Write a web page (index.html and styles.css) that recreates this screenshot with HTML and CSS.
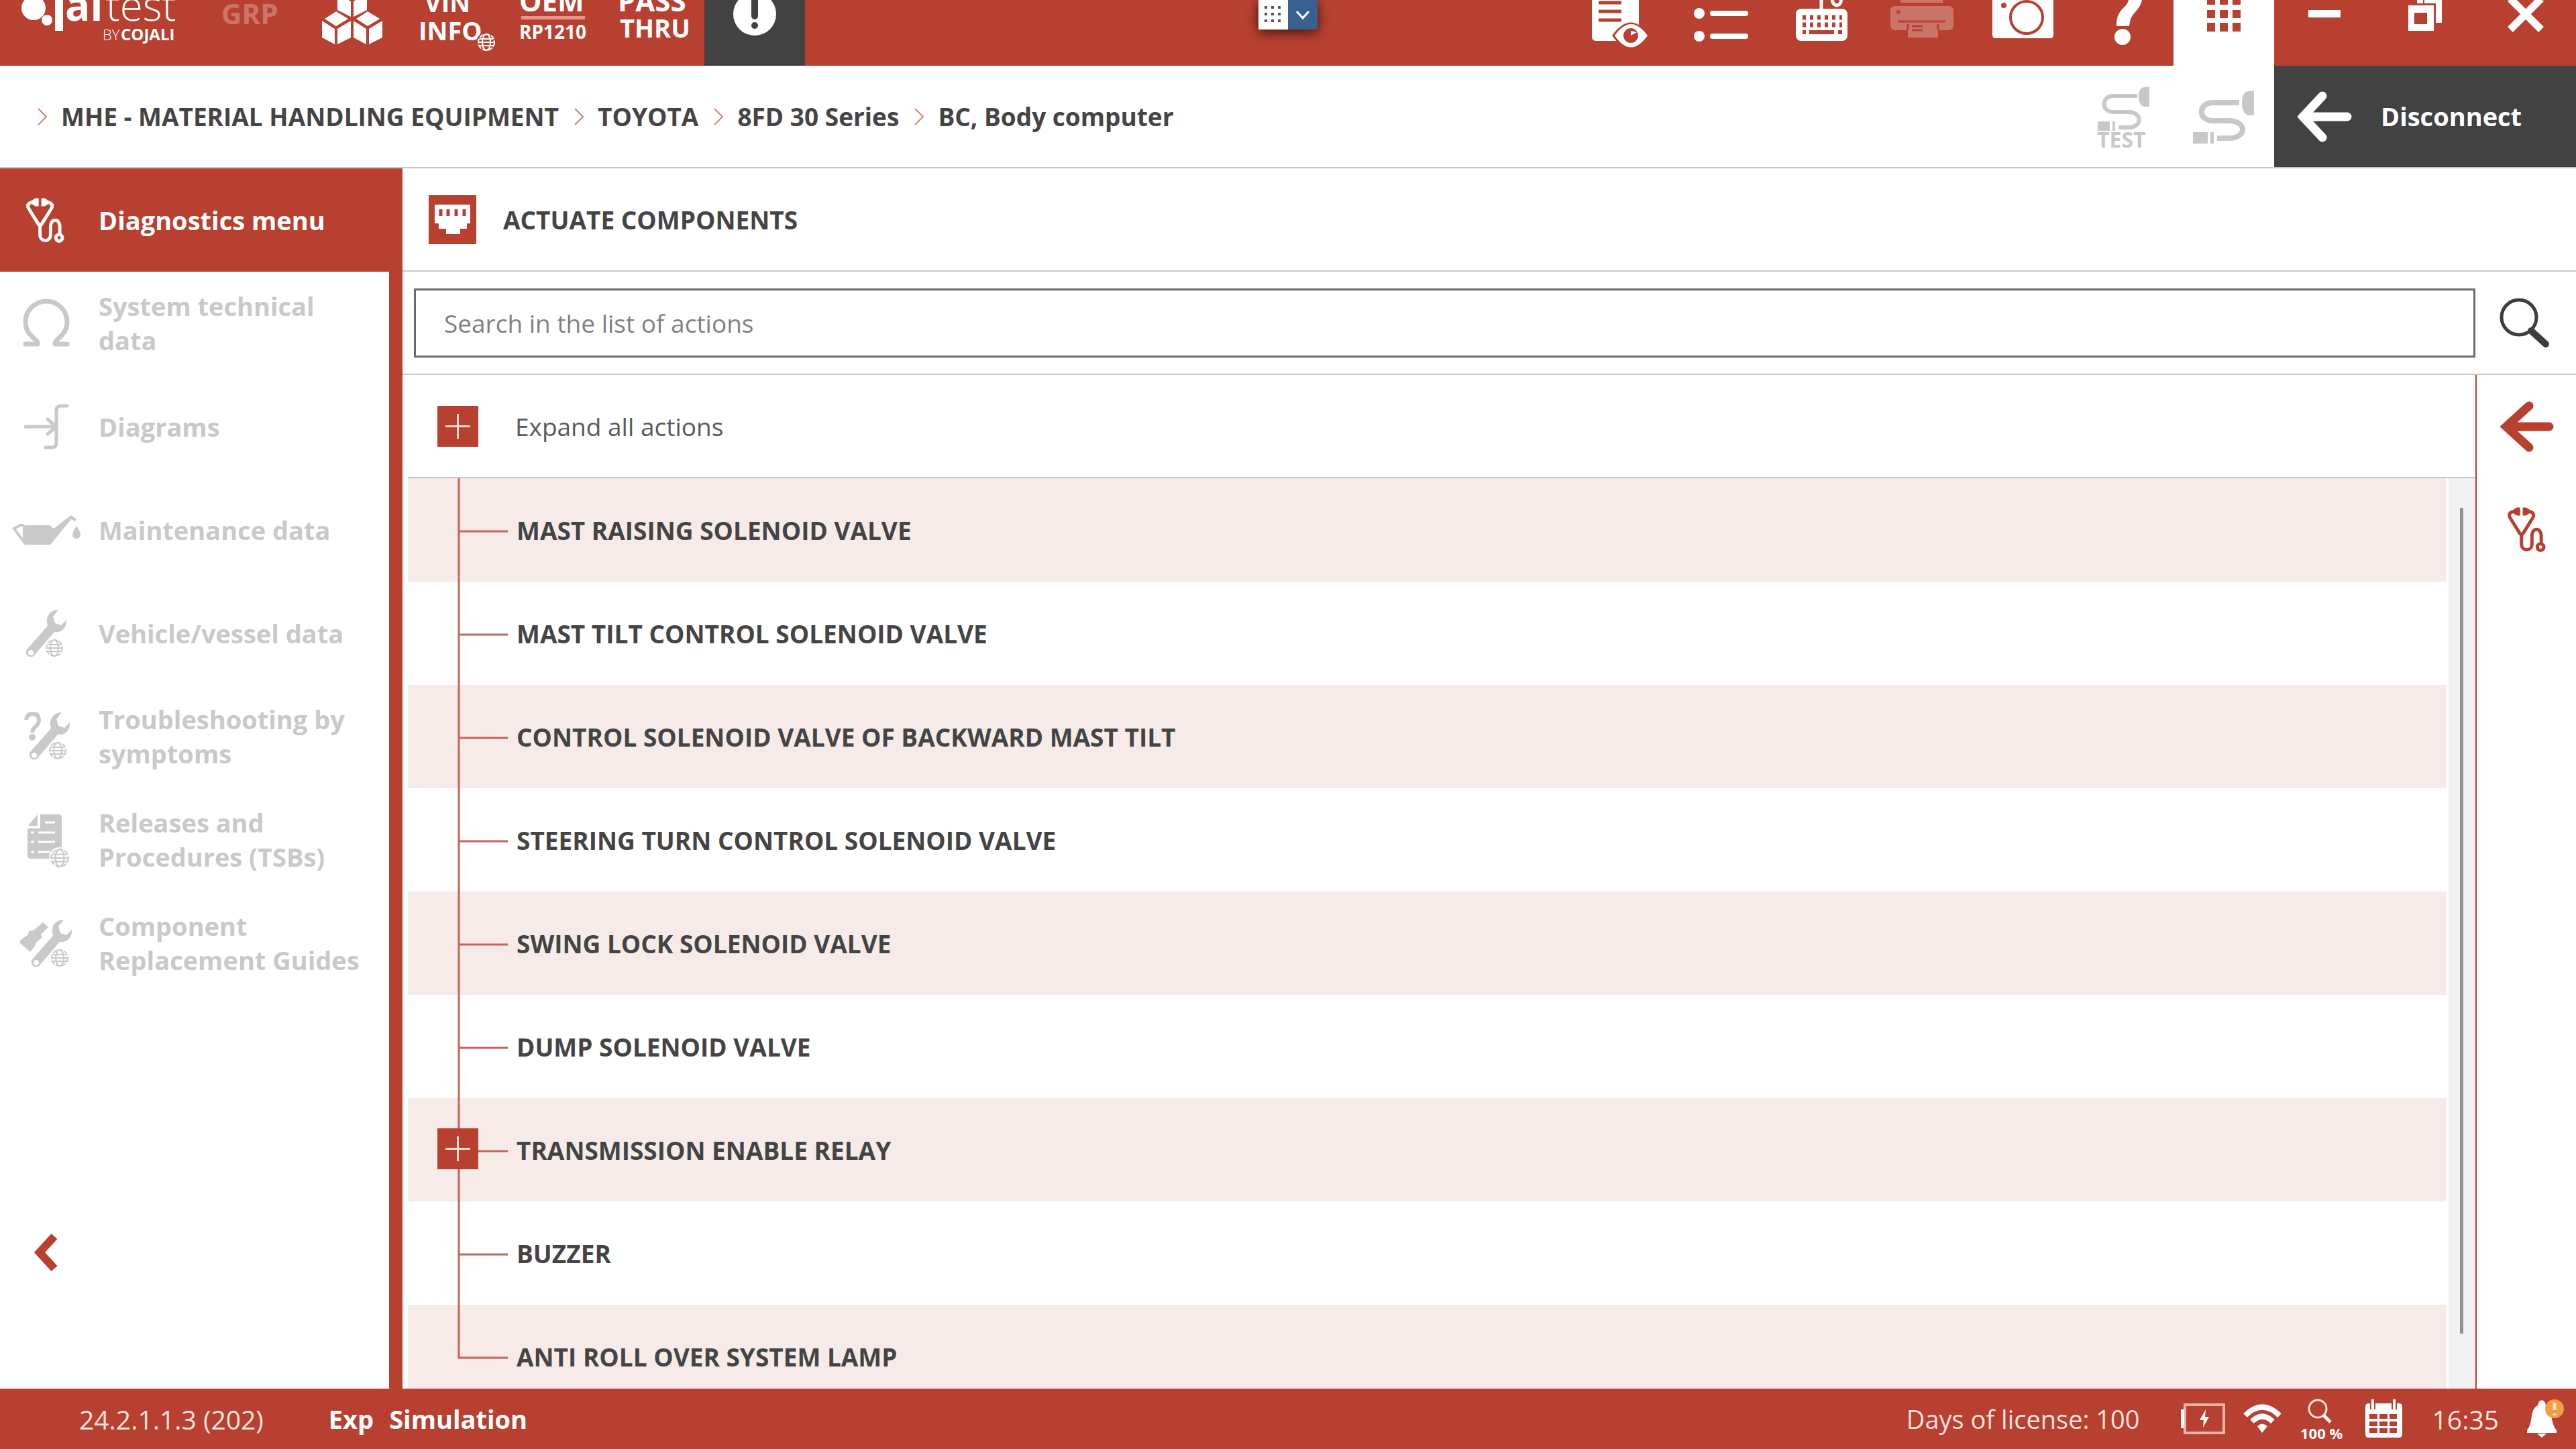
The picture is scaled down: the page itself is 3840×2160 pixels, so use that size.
FILE: index.html
```html
<!DOCTYPE html>
<html lang="en">
<head>
<meta charset="utf-8">
<title>Jaltest - Actuate components</title>
<link rel="stylesheet" href="styles.css">
</head>
<body>
<svg class="defs" aria-hidden="true">
  <symbol id="steth" viewBox="0 0 58 68">
    <g fill="none" stroke="currentColor" stroke-width="5" stroke-linejoin="round">
      <path d="M16 6H9C3 7 1 11 4 16L19 40H23L38 16C41 11 39 7 33 6H26"/>
      <path d="M21 40V55C21 67 37 67 37 55V43C37 30 51 30 51 43V55"/>
      <circle cx="50" cy="60" r="5"/>
    </g>
    <path fill="currentColor" d="M9 3L14 0H19V12H14L9 9ZM33 3L28 0H23V12H28L33 9Z"/>
  </symbol>
  <symbol id="globe" viewBox="0 0 28 28">
    <g fill="none" stroke="currentColor" stroke-width="2">
      <circle cx="14" cy="14" r="12" stroke-dasharray="7 2"/>
      <ellipse cx="14" cy="14" rx="6" ry="12"/>
      <path d="M4 9H24M2 14H26M4 19H24"/>
    </g>
  </symbol>
  <symbol id="wrench" viewBox="0 0 62 72">
    <path fill="currentColor" fill-rule="evenodd" d="M49 1C38 1 31 9 32 19L33 25L2 60C-2 67 5 74 12 70L43 34C54 36 62 27 61 16L53 24L44 21L41 11ZM8 61a4 4 0 1 0 .1 0Z"/>
  </symbol>
  <symbol id="plus" viewBox="0 0 61 61">
    <path d="M12 30.500H49M30.500 12V49" stroke="#f7d9d4" stroke-width="3"/>
  </symbol>
  <symbol id="branch" viewBox="0 0 150 154">
    <path d="M76 0V154M76 79H149" stroke="#c4655a" stroke-width="3" fill="none"/>
  </symbol>
</svg>

<div class="app">
  <header class="topbar">
    <a class="logo" href="#" aria-label="Jaltest by Cojali">
      <svg width="300" height="98" viewBox="0 0 300 98">
        <circle cx="50" cy="12" r="18"/><circle cx="70" cy="30" r="8"/>
        <path d="M82 0H94V46H82Z"/>
        <text class="logo-bold" x="97" y="31">al</text>
        <text class="logo-light" x="158" y="31">test</text>
        <text class="logo-by" x="153" y="60">BY</text>
        <text class="logo-cojali" x="180" y="60">COJALI</text>
      </svg>
    </a>
    <button class="tool faded" disabled><svg width="150" height="98" viewBox="300 0 150 98"><text class="t-grp" x="330" y="36">GRP</text></svg></button>
    <button class="tool" aria-label="Modules"><svg width="150" height="98" viewBox="450 0 150 98">
      <path d="M501 17L519 28L501 39L484 28ZM480 31L499 43V66L480 56ZM503 43L523 31V56L503 66ZM548 17L566 28L548 39L531 28ZM527 31L546 43V66L527 56ZM550 43L570 31V56L550 66ZM503-10L523 2V25L503 15ZM527 2L547-10V15L527 25Z"/>
    </svg></button>
    <button class="tool"><svg width="150" height="98" viewBox="600 0 150 98">
      <text class="t-tool" x="633" y="18">VIN</text><text class="t-tool" x="624" y="60">INFO</text>
      <circle cx="725" cy="63" r="15" fill="#b84030"/><use href="#globe" x="711" y="49" width="28" height="28"/>
    </svg></button>
    <button class="tool"><svg width="150" height="98" viewBox="750 0 150 98">
      <text class="t-big" x="774" y="17">OEM</text><path fill="#e09a8f" d="M777 24H872V29H777Z"/><text class="t-small" x="774" y="58">RP1210</text>
    </svg></button>
    <button class="tool"><svg width="150" height="98" viewBox="900 0 150 98">
      <text class="t-big" x="921" y="17">PASS</text><text class="t-tool" x="924" y="56">THRU</text>
    </svg></button>
    <button class="tool dark" aria-label="Alerts"><svg width="150" height="98" viewBox="1050 0 150 98">
      <circle cx="1125" cy="21" r="32"/><path d="M1125 0V24" stroke="#424242" stroke-width="10" stroke-linecap="round"/><circle cx="1125" cy="38" r="5" fill="#424242"/>
    </svg></button>
    <span class="spacer"></span>
    <button class="tool" aria-label="Reports"><svg width="150" height="98" viewBox="2340 0 150 98">
      <path d="M2373 0H2443V61H2379Q2373 61 2373 54Z"/>
      <path d="M2383 4H2417M2383 17H2417M2383 30H2417" stroke="#b84030" stroke-width="5"/>
      <path d="M2403 53Q2431 14 2459 53Q2431 92 2403 53Z" fill="#b84030"/>
      <path d="M2407 53Q2431 19 2456 53Q2431 88 2407 53Z"/>
      <circle cx="2431" cy="53" r="11" fill="#b84030"/><path d="M2431 53V46L2440 48Z"/>
    </svg></button>
    <button class="tool" aria-label="List"><svg width="150" height="98" viewBox="2490 0 150 98">
      <circle cx="2533" cy="20" r="8"/><circle cx="2533" cy="54" r="8"/>
      <path d="M2553 20H2602M2553 54H2602" stroke="#fff" stroke-width="8" stroke-linecap="round"/>
    </svg></button>
    <button class="tool" aria-label="Keyboard"><svg width="150" height="98" viewBox="2640 0 150 98">
      <rect x="2677" y="13" width="77" height="48" rx="8"/>
      <path d="M2715 14V0M2731 0Q2733 8 2738 8T2745 0" fill="none" stroke="#fff" stroke-width="5"/>
      <path d="M2687 26H2746M2687 37H2746" stroke="#b84030" stroke-width="7" stroke-dasharray="5 6"/>
      <path d="M2687 48H2692M2697 48H2734M2740 48H2746" stroke="#b84030" stroke-width="6"/>
    </svg></button>
    <button class="tool faded" aria-label="Print" disabled><svg width="150" height="98" viewBox="2790 0 150 98">
      <path d="M2833 0H2896V4H2833ZM2826 9H2904Q2912 9 2912 16V38Q2912 45 2904 45H2889V56H2844V45H2826Q2818 45 2818 38V16Q2818 9 2826 9Z"/>
      <path d="M2829 32H2900M2844 36V45M2889 36V45M2850 39H2866M2850 45H2866" stroke="#b84030" stroke-width="3"/><circle cx="2830" cy="18" r="3" fill="#b84030"/>
    </svg></button>
    <button class="tool" aria-label="Screenshot"><svg width="150" height="98" viewBox="2940 0 150 98">
      <path d="M2970 0H3061V52Q3061 57 3056 57H2975Q2970 57 2970 52Z"/>
      <circle cx="3021" cy="26" r="24" fill="none" stroke="#b84030" stroke-width="4"/><circle cx="2987" cy="8" r="4" fill="#b84030"/>
    </svg></button>
    <button class="tool" aria-label="Help"><svg width="150" height="98" viewBox="3090 0 150 98">
      <path d="M3173 0H3193Q3191 10 3182 19Q3175 26 3174 39H3155Q3154 22 3165 12Q3172 6 3173 0Z"/><circle cx="3164" cy="55" r="12"/>
    </svg></button>
    <button class="tool white" aria-label="Applications"><svg width="150" height="98" viewBox="3240 0 150 98">
      <path d="M3290 0h12v7h-12zM3309 0h12v7h-12zM3328 0h12v7h-12zM3290 15h12v12h-12zM3309 15h12v12h-12zM3328 15h12v12h-12zM3290 34h12v13h-12zM3309 34h12v13h-12zM3328 34h12v13h-12z"/>
    </svg></button>
    <button class="tool" aria-label="Minimize"><svg width="150" height="98" viewBox="3390 0 150 98"><path d="M3441 15H3489V26H3441Z"/></svg></button>
    <button class="tool" aria-label="Restore"><svg width="150" height="98" viewBox="3540 0 150 98">
      <path fill-rule="evenodd" d="M3590 8H3628V46H3590ZM3599 19V36H3618V19Z"/><path d="M3603 0H3612V5H3603ZM3614 0H3640V34H3631V5H3614Z"/>
    </svg></button>
    <button class="tool" aria-label="Close"><svg width="150" height="98" viewBox="3690 0 150 98"><path d="M3742-2L3788 44M3788-2L3742 44" stroke="#fff" stroke-width="11"/></svg></button>

    <div class="dock">
      <button class="dock-grid" aria-label="Toolbar"><svg width="44" height="44" viewBox="0 0 44 44"><path d="M9 9h4v4h-4zM19 9h4v4h-4zM29 9h4v4h-4zM9 19h4v4h-4zM19 19h4v4h-4zM29 19h4v4h-4zM9 29h4v4h-4zM19 29h4v4h-4zM29 29h4v4h-4z" fill="#555"/></svg></button>
      <button class="dock-more" aria-label="More"><svg width="44" height="44" viewBox="0 0 44 44"><path d="M13 17L22 27L31 17" fill="none" stroke="#fff" stroke-width="3"/></svg></button>
    </div>
  </header>

  <div class="pathbar">
    <nav class="crumbs" aria-label="Breadcrumb">
      <svg class="chev" viewBox="0 0 16 28"><path d="M2 2L14 14L2 26"/></svg><a href="#">MHE - MATERIAL HANDLING EQUIPMENT</a>
      <svg class="chev" viewBox="0 0 16 28"><path d="M2 2L14 14L2 26"/></svg><a href="#">TOYOTA</a>
      <svg class="chev" viewBox="0 0 16 28"><path d="M2 2L14 14L2 26"/></svg><a href="#">8FD 30 Series</a>
      <svg class="chev" viewBox="0 0 16 28"><path d="M2 2L14 14L2 26"/></svg><a href="#">BC, Body computer</a>
    </nav>
    <button class="cable" aria-label="Cable test" disabled><svg width="150" height="151" viewBox="3090 98 150 151">
      <path d="M3186 143H3150C3132 143 3132 167 3150 167H3173C3194 167 3194 190 3173 190H3158" fill="none" stroke="#c8c8c8" stroke-width="6"/>
      <path d="M3204 129V159H3196Q3188 157 3188 144T3196 130ZM3127 181H3145V195H3127ZM3149 181H3153V195H3149Z"/>
      <text class="t-test" x="3126" y="220">TEST</text>
    </svg></button>
    <button class="cable" aria-label="Cable" disabled><svg width="150" height="151" viewBox="3240 98 150 151">
      <path d="M3338 153H3299C3276 153 3276 180 3299 180H3322C3350 180 3350 206 3322 206H3305" fill="none" stroke="#c8c8c8" stroke-width="8"/>
      <path d="M3360 135V172H3352Q3342 169 3342 153T3352 136ZM3269 197H3291V214H3269ZM3295 197H3300V214H3295Z"/>
    </svg></button>
    <button class="disconnect"><svg class="arrow" viewBox="0 0 81 76"><path d="M37 7L8 38L37 69M10 38H74"/></svg>Disconnect</button>
  </div>

  <div class="main">
    <nav class="sidebar" aria-label="Sections">
      <a class="item active" href="#"><svg viewBox="0 251 140 154"><use href="#steth" x="39" y="295" width="57" height="68"/></svg><span>Diagnostics menu</span></a>
      <a class="item" href="#"><svg viewBox="0 405 140 154"><path d="M38 513H56C58 506 38 501 38 480A31 31 0 0 1 100 480C100 501 80 506 82 513H100" fill="none" stroke="currentColor" stroke-width="7" stroke-linecap="round" stroke-linejoin="round"/></svg><span>System technical data</span></a>
      <a class="item" href="#"><svg viewBox="0 559 140 154"><path d="M38 636H84M71 625L84 636L71 647M100 605H91Q84 605 84 612V660Q84 667 77 667H68" fill="none" stroke="currentColor" stroke-width="5" stroke-linecap="round"/></svg><span>Diagrams</span></a>
      <a class="item" href="#"><svg viewBox="0 713 140 154"><path fill="currentColor" d="M37 783H74L80 788L106 768L114 774L112 777L106 774L75 812H37L34 809V786ZM114 784Q120 793 120 797A6 6 0 0 1 108 797Q108 793 114 784Z"/><path d="M35 807L21 788L30 783H36" fill="none" stroke="currentColor" stroke-width="4"/></svg><span>Maintenance data</span></a>
      <a class="item" href="#"><svg viewBox="0 867 140 154"><use href="#wrench" x="38" y="908" width="62" height="72"/><circle cx="81" cy="966" r="14" fill="#fff"/><use href="#globe" x="67" y="952" width="28" height="28"/></svg><span>Vehicle/vessel data</span></a>
      <a class="item" href="#"><svg viewBox="0 1021 140 154"><path d="M39 1073Q40 1064 49 1064T58 1074C58 1082 48 1084 48 1092" fill="none" stroke="currentColor" stroke-width="6"/><circle cx="48" cy="1099" r="5" fill="currentColor"/><use href="#wrench" x="43" y="1061" width="62" height="72"/><circle cx="86" cy="1119" r="14" fill="#fff"/><use href="#globe" x="72" y="1105" width="28" height="28"/></svg><span>Troubleshooting by symptoms</span></a>
      <a class="item" href="#"><svg viewBox="0 1175 140 154"><path fill="currentColor" d="M60 1214H87Q92 1214 92 1219V1280H46Q41 1280 41 1275V1235H60ZM56 1214V1231H42Z"/><path d="M67 1226H82M57 1241H82M57 1255H82M57 1270H75M46 1241H51M46 1255H51M46 1270H51" stroke="#fff" stroke-width="3"/><circle cx="89" cy="1279" r="16" fill="#fff"/><use href="#globe" x="74" y="1264" width="30" height="30"/></svg><span>Releases and Procedures (TSBs)</span></a>
      <a class="item" href="#"><svg viewBox="0 1329 140 154"><path fill="currentColor" d="M64 1375L72 1382L61 1393L63 1397L53 1406V1409L45 1419L30 1406V1402L42 1393L43 1388L50 1387Z"/><use href="#wrench" x="46" y="1370" width="62" height="72"/><circle cx="89" cy="1428" r="14" fill="#fff"/><use href="#globe" x="75" y="1414" width="28" height="28"/></svg><span>Component Replacement Guides</span></a>
      <button class="collapse" aria-label="Collapse menu"><svg width="140" height="154" viewBox="0 0 140 154"><path d="M81 53L59 77L81 101" fill="none" stroke="#b84030" stroke-width="12"/></svg></button>
    </nav>

    <main class="content">
      <div class="title">
        <svg width="71" height="73" viewBox="0 0 71 73"><path fill="#b84030" d="M0 0H71V73H0Z"/><path fill="#fff" d="M9 14H62V42H57V50H47V58H26V50H15V42H9Z"/><path d="M18 21V31M29 21V31M41 21V31M53 21V31" stroke="#b84030" stroke-width="5"/></svg>
        <h1>ACTUATE COMPONENTS</h1>
      </div>
      <form class="search">
        <input type="text" aria-label="Search in the list of actions" placeholder="Search in the list of actions">
        <button type="button" aria-label="Search"><svg width="148" height="103" viewBox="3693 430 148 103"><circle cx="3756" cy="473" r="26" fill="none" stroke="#3d3d3d" stroke-width="5"/><path d="M3774 493L3796 513" stroke="#3d3d3d" stroke-width="10" stroke-linecap="round"/></svg></button>
      </form>
      <div class="body">
        <section class="panel">
          <button class="expand"><span class="box"><svg><use href="#plus"/></svg></span>Expand all actions</button>
          <div class="listwrap">
            <ul class="list">
              <li><svg><use href="#branch"/></svg>MAST RAISING SOLENOID VALVE</li>
              <li><svg><use href="#branch"/></svg>MAST TILT CONTROL SOLENOID VALVE</li>
              <li><svg><use href="#branch"/></svg>CONTROL SOLENOID VALVE OF BACKWARD MAST TILT</li>
              <li><svg><use href="#branch"/></svg>STEERING TURN CONTROL SOLENOID VALVE</li>
              <li><svg><use href="#branch"/></svg>SWING LOCK SOLENOID VALVE</li>
              <li><svg><use href="#branch"/></svg>DUMP SOLENOID VALVE</li>
              <li><svg><use href="#branch"/></svg><button class="box over" aria-label="Expand"><svg><use href="#plus"/></svg></button>TRANSMISSION ENABLE RELAY</li>
              <li><svg><use href="#branch"/></svg>BUZZER</li>
              <li><svg viewBox="0 0 150 154"><path d="M76 0V79H149" stroke="#c4655a" stroke-width="3" fill="none"/></svg>ANTI ROLL OVER SYSTEM LAMP</li>
            </ul>
            <div class="track"><div class="thumb"></div></div>
          </div>
        </section>
        <aside class="rail">
          <button aria-label="Back"><svg class="arrow" viewBox="0 0 81 76"><path d="M44 7L10 38L44 69M12 38H74"/></svg></button>
          <button aria-label="Diagnostics"><svg width="57" height="68"><use href="#steth"/></svg></button>
        </aside>
      </div>
    </main>
  </div>

  <footer class="status">
    <span class="num version">24.2.1.1.3 (202)</span>
    <b class="exp">Exp</b><b>Simulation</b>
    <span class="spacer"></span>
    <span>Days of license: 100</span>
    <svg width="436" height="90" viewBox="3191 2070 436 90" fill="#fff">
      <path d="M3258 2094H3316V2136H3258Z" fill="none" stroke="#efb5ab" stroke-width="4"/><path d="M3252 2101H3257V2129H3252ZM3289 2101L3280 2117H3286L3285 2128L3294 2112H3288Z"/>
      <g fill="none" stroke="#fff" stroke-width="8"><path d="M3348 2110Q3373 2085 3399 2110M3358 2119Q3373 2104 3389 2119"/></g><path d="M3373 2136L3366 2126Q3373 2119 3381 2126Z"/>
      <circle cx="3456" cy="2100" r="13" fill="none" stroke="#fbe3df" stroke-width="3"/><path d="M3465 2110L3475 2120" stroke="#fff" stroke-width="5"/>
      <text class="t-zoom" x="3430" y="2145">100 %</text>
      <path fill-rule="evenodd" d="M3532 2092H3577Q3582 2092 3582 2097V2138Q3582 2143 3577 2143H3532Q3527 2143 3527 2138V2097Q3527 2092 3532 2092ZM3533 2108V2115H3545V2108ZM3548 2108V2115H3560V2108ZM3563 2108V2115H3574V2108ZM3533 2119V2126H3545V2119ZM3548 2119V2126H3560V2119ZM3563 2119V2126H3574V2119ZM3533 2129V2136H3545V2129ZM3548 2129V2136H3560V2129ZM3563 2129V2136H3574V2129Z"/>
      <path d="M3538 2089V2101M3570 2089V2101" stroke="#b84030" stroke-width="8"/><path d="M3538 2086V2102M3570 2086V2102" stroke="#fff" stroke-width="4"/>
    </svg>
    <span class="num">16:35</span>
    <svg width="115" height="90" viewBox="3725 2070 115 90" fill="#fff">
      <path d="M3789 2087Q3794 2088 3795 2095C3806 2102 3801 2120 3811 2132V2136H3767V2132C3777 2120 3770 2102 3783 2095Q3784 2088 3789 2087ZM3782 2137H3796L3789 2143Z"/>
      <circle cx="3808" cy="2100" r="14" fill="#ef9f45"/><path d="M3808 2091V2102M3808 2107V2110" stroke="#fbdcb4" stroke-width="5"/>
    </svg>
  </footer>
</div>
</body>
</html>
```
FILE: styles.css
```css
* { box-sizing: border-box; }
body {
  margin: 0;
  font: 700 37px/51px "Open Sans", "Noto Sans", sans-serif;
  color: #444;
  background: #fff;
}
a { color: inherit; text-decoration: none; }
button {
  margin: 0;
  padding: 0;
  border: 0;
  background: none;
  font: inherit;
  color: inherit;
}
svg { display: block; flex: none; }
.defs { position: absolute; width: 0; height: 0; }
.spacer { flex: 1; }

.app { display: flex; flex-direction: column; height: 100vh; overflow: hidden; }

/* Top toolbar */
.topbar {
  position: relative;
  display: flex;
  flex: none;
  background: #b84030;
  color: #fff;
  fill: #fff;
}
.tool.dark { background: #424242; }
.tool.white { background: #fff; fill: #b84030; }
.tool.faded svg { opacity: 0.28; }
.logo-bold { font-size: 62px; font-weight: 700; }
.logo-light { font-size: 62px; font-weight: 300; }
.logo-by { font-size: 22px; font-weight: 300; }
.logo-cojali { font-size: 24px; font-weight: 700; }
.t-grp { font-size: 42px; font-weight: 700; }
.t-tool { font-size: 38px; font-weight: 700; }
.t-big { font-size: 42px; font-weight: 700; }
.t-small { font-size: 28px; font-weight: 700; }
.dock {
  position: absolute;
  top: 0;
  left: 50%;
  display: flex;
  transform: translateX(-50%);
  box-shadow: 0 4px 18px rgba(0, 0, 0, 0.7);
}
.dock-grid { background: #fff; }
.dock-more { background: #38618f; }

/* Breadcrumb bar */
.pathbar {
  display: flex;
  flex: none;
  height: 153px;
  border-bottom: 2px solid #c8c8c8;
}
.crumbs { display: flex; flex: 1; align-items: center; gap: 20px; padding-left: 55px; }
.crumbs a { margin-right: 2px; }
.chev { width: 16px; height: 28px; fill: none; stroke: #cf8177; stroke-width: 2; }
.cable { fill: #c8c8c8; }
.t-test { font-size: 32px; font-weight: 700; }
.disconnect {
  display: flex;
  align-items: center;
  width: 450px;
  gap: 43px;
  padding-left: 35px;
  background: #424242;
  color: #fff;
  font-size: 38px;
}
.arrow {
  width: 81px;
  height: 76px;
  fill: none;
  stroke: currentColor;
  stroke-width: 13px;
  stroke-linecap: round;
}

/* Sidebar */
.main { display: flex; flex: 1; min-height: 0; }
.sidebar {
  display: flex;
  flex: none;
  flex-direction: column;
  width: 600px;
  border-right: 20px solid #b84030;
  color: #c9c9c9;
  font-size: 38px;
}
.item { display: flex; flex: none; align-items: center; gap: 7px; height: 154px; }
.item svg { width: 140px; height: 154px; }
.item span { width: 400px; }
.item.active { background: #b84030; color: #fff; }
.collapse { margin-top: auto; margin-bottom: 126px; align-self: flex-start; }

/* Content */
.content { display: flex; flex: 1; flex-direction: column; min-width: 0; }
.title {
  display: flex;
  flex: none;
  align-items: center;
  gap: 40px;
  height: 154px;
  padding-left: 39px;
  border-bottom: 2px solid #c8c8c8;
}
h1 { margin: 0; font: inherit; }
.search {
  display: flex;
  flex: none;
  align-items: center;
  gap: 2px;
  height: 154px;
  padding-left: 17px;
  border-bottom: 2px solid #c8c8c8;
}
.search input {
  flex: 1;
  min-width: 0;
  height: 103px;
  padding: 0 42px;
  border: 3px solid #6a6a6a;
  font: 400 37px "Open Sans", "Noto Sans", sans-serif;
}
.search input::placeholder { color: #808080; opacity: 1; }
.body { display: flex; flex: 1; min-height: 0; }
.panel {
  display: flex;
  flex: 1;
  flex-direction: column;
  min-width: 0;
  border-right: 2px solid #b84030;
}
.expand {
  display: flex;
  flex: none;
  align-items: center;
  gap: 55px;
  height: 154px;
  margin-left: 8px;
  padding-left: 44px;
  border-bottom: 2px solid #c8c8c8;
  color: #5a5a5a;
  font-weight: 400;
}
.box { width: 61px; height: 61px; background: #b84030; }
.box svg { width: 61px; height: 61px; }
.listwrap { display: flex; flex: 1; min-height: 0; gap: 3px; padding-left: 8px; }
.list { flex: 1; margin: 0; padding: 0; overflow: hidden; list-style: none; }
.list li { position: relative; display: flex; align-items: center; gap: 12px; height: 154px; }
.list li:nth-child(odd) { background: #f7ebea; }
.list li > svg { width: 150px; height: 154px; }
.over { position: absolute; left: 44px; top: 45px; }
.track {
  display: flex;
  flex: none;
  width: 40px;
  padding: 44px 0 82px 17px;
  background: #f1f1f1;
}
.thumb { width: 5px; background: #919191; }
.rail { flex: none; width: 148px; }
.rail button {
  display: flex;
  align-items: center;
  justify-content: center;
  width: 148px;
  height: 154px;
  color: #b84030;
}

/* Status bar */
.status {
  display: flex;
  flex: none;
  align-items: center;
  height: 90px;
  padding-left: 118px;
  background: #b84030;
  color: #fbe3df;
  font-size: 38px;
  font-weight: 400;
}
.status b { color: #fff; }
.num { font-size: 39px; }
.version { margin-right: 97px; }
.exp { margin-right: 23px; }
.t-zoom { font-size: 22px; font-weight: 700; }
```
